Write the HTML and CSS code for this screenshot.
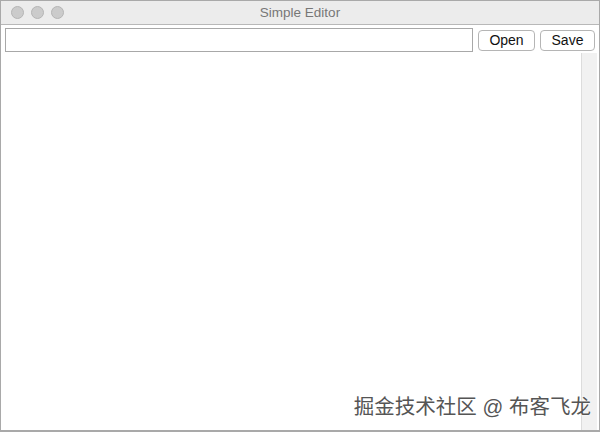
FILE: index.html
```html
<!DOCTYPE html>
<html lang="en">
<head>
    <meta charset="UTF-8">
    <title>Simple Editor</title>
    <link rel="stylesheet" href="styles.css">
</head>
<body>
    <div class="window">
        <div class="titlebar">
            <div class="lights">
                <span class="light"></span>
                <span class="light"></span>
                <span class="light"></span>
            </div>
            <div class="title">Simple Editor</div>
        </div>
        <div class="toolbar">
            <input type="text" class="path-field">
            <button class="btn">Open</button>
            <button class="btn">Save</button>
        </div>
        <div class="editor">
            <div class="text-area"></div>
            <div class="scrollbar"></div>
        </div>
        <div class="watermark">掘金技术社区 @ 布客飞龙</div>
    </div>
</body>
</html>
```

FILE: styles.css
```css
body {
    margin: 0;
    padding: 0;
    font-family: 'Liberation Sans', 'Noto Sans CJK SC', sans-serif;
    background: #fff;
}

.window {
    position: relative;
    width: 600px;
    height: 432px;
    box-sizing: border-box;
    border: 1px solid #a9a9a9;
    border-bottom: 2px solid #a9a9a9;
    display: flex;
    flex-direction: column;
    overflow: hidden;
}

.titlebar {
    position: relative;
    height: 23px;
    background: #ececec;
    border-bottom: 1px solid #b8b8b8;
    display: flex;
    align-items: center;
    justify-content: center;
    flex-shrink: 0;
}

.lights {
    position: absolute;
    left: 10px;
    top: 5px;
    display: flex;
    gap: 7px;
}

.light {
    width: 11px;
    height: 11px;
    border-radius: 50%;
    background: #cbcbcb;
    border: 1px solid #b5b5b5;
}

.title {
    font-size: 13.5px;
    color: #777;
}

.toolbar {
    display: flex;
    align-items: center;
    gap: 5px;
    padding: 3px 3px 0 4px;
    height: 24px;
    flex-shrink: 0;
}

.path-field {
    width: 468px;
    height: 24px;
    box-sizing: border-box;
    margin: 0;
    border: 1px solid #a8a8a8;
    background: #fff;
    outline: none;
}

.btn {
    height: 21px;
    box-sizing: border-box;
    padding: 0;
    margin: 0;
    width: 57px;
    font-family: 'Liberation Sans', sans-serif;
    font-size: 14px;
    color: #111;
    background: #fff;
    border: 1px solid #b5b5b5;
    border-radius: 4px;
}

.btn + .btn {
    width: 55px;
}

.editor {
    flex: 1;
    display: flex;
    padding-top: 1px;
}

.text-area {
    flex: 1;
}

.scrollbar {
    width: 15px;
    margin-right: 2px;
    background: #f1f1f1;
    border-left: 1px solid #dcdcdc;
}

.watermark {
    position: absolute;
    right: 8px;
    bottom: 10px;
    font-size: 20.5px;
    color: #555;
    text-shadow: 0 0 2px #fff, 0 0 2px #fff;
}
```
